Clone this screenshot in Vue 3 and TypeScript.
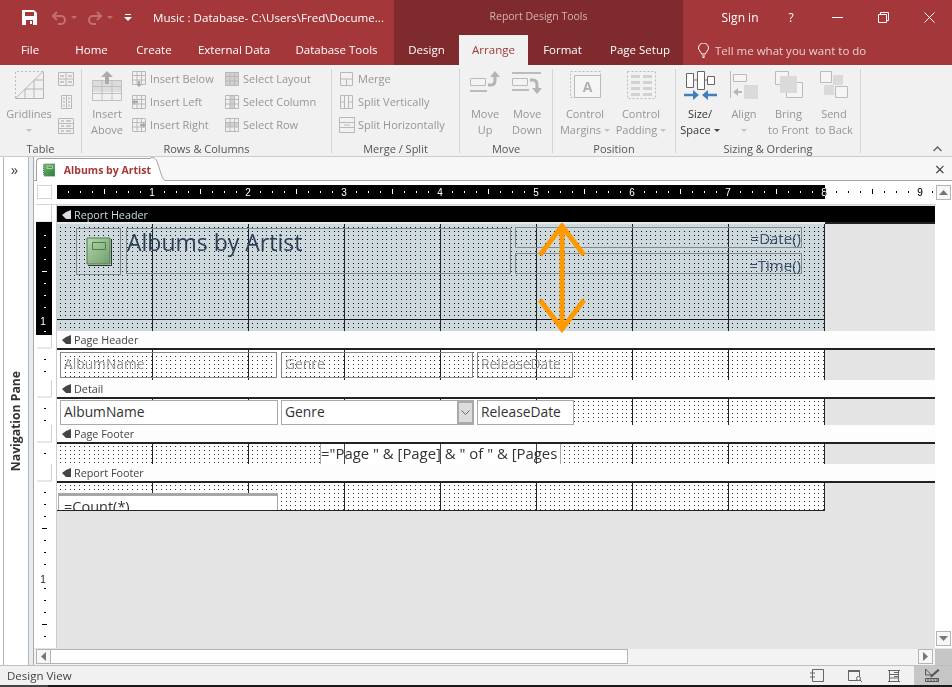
<script setup lang="ts">
type Tab = { label: string; width: number; active?: boolean }

const mainTabs: Tab[] = [
  { label: 'File', width: 60 },
  { label: 'Home', width: 63 },
  { label: 'Create', width: 62 },
  { label: 'External Data', width: 98 },
  { label: 'Database Tools', width: 107 },
]
const contextTabs: Tab[] = [
  { label: 'Design', width: 65 },
  { label: 'Arrange', width: 69, active: true },
  { label: 'Format', width: 69 },
  { label: 'Page Setup', width: 86 },
]

// ruler ticks every 1/8 inch = 12px, origin at the left of the paper
const hTicks: number[] = []
for (let n = 1; n <= 73; n++) hTicks.push(n)

const vTicks = [235, 247, 259, 271, 283, 295, 307, 331, 359, 371, 408, 420, 453, 492, 504, 516, 528, 540, 552, 564, 588, 600, 612, 624, 636]
const longTicks = [271, 528, 624]
const whiteTo = 335
const vCells = [[205, 17], [335, 13], [380, 17], [425, 17], [464, 17]]
</script>

<template>
  <div class="app">
    <svg width="0" height="0" class="defs">
      <symbol id="minigrid" viewBox="0 0 14 14">
        <path d="M.5.5h13v13H.5zM.5 4.5h13M.5 9h13M5 .5v13M9.500 .5v13" fill="none" stroke="#b8b8b8" />
      </symbol>
    </svg>

    <div class="titlebar">
      <div class="qat">
        <svg class="save" width="15" height="15" viewBox="0 0 15 15"><path d="M0 0h12l3 3v12H0z" fill="#fff" /><path d="M3 2h9v4H3zM4 10h7v5H4z" fill="#a4373a" /><path d="M8 11h2v3H8z" fill="#fff" /></svg>
        <svg class="undo" width="16" height="14" viewBox="0 0 16 14"><path d="M6 1 2 5l4 4M2 5h8a4 4 0 0 1 0 8H7" fill="none" stroke="#c17173" stroke-width="2" /></svg>
        <span class="mini dim" />
        <svg class="redo" width="16" height="14" viewBox="0 0 16 14"><path d="m10 1 4 4-4 4M14 5H6a4 4 0 0 0 0 8h3" fill="none" stroke="#c17173" stroke-width="2" /></svg>
        <span class="mini dim" />
        <svg class="custom" width="8" height="8" viewBox="0 0 8 8"><path d="M1 0h6v1H1zM0 3h8L4 7z" fill="#fff" /></svg>
        <span class="doc-title">Music : Database- C:\Users\Fred\Docume...</span>
      </div>
      <div class="context-title">Report Design Tools</div>
      <div class="winctl">
        <span class="wbtn signin">Sign in</span>
        <span class="wbtn">?</span>
        <span class="wbtn"><svg width="11" height="11" viewBox="0 0 11 11"><path d="M0 5.500h11" stroke="#fff" /></svg></span>
        <span class="wbtn"><svg width="11" height="11" viewBox="0 0 11 11"><path d="M.5 2.500h8v8h-8zM2.500 2.500v-2h8v8h-2" fill="none" stroke="#fff" /></svg></span>
        <span class="wbtn"><svg width="11" height="11" viewBox="0 0 11 11"><path d="m.5.500 10 10M10.500.5l-10 10" stroke="#fff" /></svg></span>
      </div>
    </div>

    <div class="tabs">
      <span v-for="t in mainTabs" :key="t.label" class="tab" :style="{ width: t.width + 'px' }">{{ t.label }}</span>
      <span class="tab-gap" />
      <div class="context-tabs">
        <span v-for="t in contextTabs" :key="t.label" class="tab" :class="{ active: t.active }" :style="{ width: t.width + 'px' }">{{ t.label }}</span>
      </div>
      <div class="tellme">
        <svg width="11" height="15" viewBox="0 0 11 15"><path d="M3.500 11C3 8.500.5 7.500.5 5a5 5 0 0 1 10 0c0 2.500-2.500 3.500-3 6zM4 13h3M4.500 14.500h2" fill="none" stroke="#fff" /></svg>
        <span>Tell me what you want to do</span>
      </div>
    </div>

    <div class="ribbon">
      <!-- Table -->
      <div class="group g-table">
        <div class="gbody">
          <div class="big w52">
            <div class="bigicon">
              <svg width="29" height="28" viewBox="0 0 29 28"><path d="M.5 27V.5H28" fill="none" stroke="#bbb" stroke-dasharray="2 2" /><path d="M28 .5.5 27.500H28.500V.5M10 18v9M19 9v18M10 18h18M19 9h9" fill="none" stroke="#b5b5b5" /></svg>
            </div>
            <span>Gridlines</span>
            <i class="caret" />
          </div>
          <div class="stack">
            <svg width="16" height="14" viewBox="0 0 16 14"><path d="M.5.5h15v13H.5zM.5 7h15M8 .5v13" fill="none" stroke="#b8b8b8" /><path d="M2 3h4v2H2zM10 3h4v2h-4zM10 9h4v2h-4zM2 9h4v2H2z" fill="#c8c8c8" /></svg>
            <svg width="11" height="14" viewBox="0 0 11 14"><path d="M.5.5h10v13H.5zM5.500 .5v13" fill="none" stroke="#b8b8b8" /><path d="M2 2.500h2v2H2zM7 2.500h2v2H7zM2 6h2v2H2zM7 6h2v2H7zM2 9.500h2v2H2zM7 9.500h2v2H7z" fill="#c8c8c8" /></svg>
            <svg width="16" height="16" viewBox="0 0 16 16"><path d="M.5.500h15v15H.5zM.5 5.500h15M.5 10.500h15" fill="none" stroke="#b8b8b8" /><path d="M3 2h3v2H3zM8 2h5v2H8zM3 7h3v2H3zM8 7h5v2H8zM3 12h3v2H3zM8 12h5v2H8z" fill="#c8c8c8" /></svg>
          </div>
        </div>
        <div class="glabel">Table</div>
      </div>

      <!-- Rows & Columns -->
      <div class="group g-rows">
        <div class="gbody">
          <div class="big w44">
            <div class="bigicon">
              <svg width="30" height="30" viewBox="0 0 30 30"><path d="M.5 9h29v12H.5z" fill="#dcdcdc" /><path d="M.5 9.500h29v20H.5zM.5 15.500h29M.5 22.500h29M10 9.500v20M20 9.500v20" fill="none" stroke="#c0c0c0" /><path d="M15 0l6 6h-4v7h-4V6H9z" fill="#ababab" /></svg>
            </div>
            <span>Insert</span>
            <span>Above</span>
          </div>
          <div class="rows r93">
            <div class="small"><svg width="14" height="16" viewBox="0 0 14 16"><use href="#minigrid" width="14" height="14" /><path d="m7 16-3-3h2v-3h2v3h2z" fill="#a8a8a8" /></svg><span>Insert Below</span></div>
            <div class="small"><svg width="14" height="14" viewBox="0 0 14 14"><use href="#minigrid" width="14" height="14" /><path d="M0 7l3-3v2h3v2H3v2z" fill="#a8a8a8" /></svg><span>Insert Left</span></div>
            <div class="small"><svg width="14" height="14" viewBox="0 0 14 14"><use href="#minigrid" width="14" height="14" /><path d="M14 7l-3-3v2H8v2h3v2z" fill="#a8a8a8" /></svg><span>Insert Right</span></div>
          </div>
          <div class="rows">
            <div class="small"><svg width="14" height="14" viewBox="0 0 14 14"><path d="M0 0h14v14H0z" fill="#d0d0d0" /><use href="#minigrid" width="14" height="14" /></svg><span>Select Layout</span></div>
            <div class="small"><svg width="14" height="14" viewBox="0 0 14 14"><path d="M5 0h5v14H5z" fill="#d0d0d0" /><use href="#minigrid" width="14" height="14" /></svg><span>Select Column</span></div>
            <div class="small"><svg width="14" height="14" viewBox="0 0 14 14"><path d="M0 4h14v5H0z" fill="#d0d0d0" /><use href="#minigrid" width="14" height="14" /></svg><span>Select Row</span></div>
          </div>
        </div>
        <div class="glabel">Rows &amp; Columns</div>
      </div>

      <!-- Merge / Split -->
      <div class="group g-merge">
        <div class="gbody">
          <div class="rows">
            <div class="small"><svg width="14" height="14" viewBox="0 0 14 14"><path d="M.5.500h12v13H.5zM.5 7h12M6.500 7v6.500" fill="none" stroke="#b8b8b8" /></svg><span>Merge</span></div>
            <div class="small"><svg width="14" height="14" viewBox="0 0 14 14"><path d="M.5.500h12v13H.5zM4.500.5v13M8.500 .5v13M.5 7h4M8.500 7h4" fill="none" stroke="#b8b8b8" /></svg><span>Split Vertically</span></div>
            <div class="small"><svg width="16" height="16" viewBox="0 0 16 16" class="wide"><path d="M.5.500h15v15H.5zM.5 5.500h15M.5 10.500h15M5 8h6" fill="none" stroke="#b8b8b8" /></svg><span>Split Horizontally</span></div>
          </div>
        </div>
        <div class="glabel">Merge / Split</div>
      </div>

      <!-- Move -->
      <div class="group g-move">
        <div class="gbody">
          <div class="big w42">
            <div class="bigicon">
              <svg width="30" height="23" viewBox="0 0 30 23"><path d="M0 20h17" stroke="#bbb" stroke-width="2" /><path d="M.5 7.500h15v7H.5z" fill="#f4f2f4" stroke="#bbb" /><path d="M18 14h3c3 0 4-2 4-5V6" fill="none" stroke="#b4b4b4" stroke-width="3" /><path d="m25 0 5 6h-10z" fill="#b4b4b4" /></svg>
            </div>
            <span>Move</span>
            <span>Up</span>
          </div>
          <div class="big w42">
            <div class="bigicon">
              <svg width="30" height="23" viewBox="0 0 30 23"><path d="M0 2h29" stroke="#bbb" stroke-width="2" /><path d="M.5 7.500h15v7H.5z" fill="#f4f2f4" stroke="#bbb" /><path d="M0 19h17" stroke="#bbb" stroke-width="2" /><path d="M18 9h3c3 0 4 2 4 5v3" fill="none" stroke="#b4b4b4" stroke-width="3" /><path d="m25 23 5-6h-10z" fill="#b4b4b4" /></svg>
            </div>
            <span>Move</span>
            <span>Down</span>
          </div>
        </div>
        <div class="glabel">Move</div>
      </div>

      <!-- Position -->
      <div class="group g-pos">
        <div class="gbody">
          <div class="big w56">
            <div class="bigicon">
              <svg width="31" height="27" viewBox="0 0 31 27"><path d="M.5.500h30v26H.5z" fill="none" stroke="#bbb" stroke-dasharray="2 2" /><path d="M4.500 4.500h26v22h-26z" fill="#f6f5f6" stroke="#bbb" /><text x="17.500" y="21" class="a-glyph">A</text></svg>
            </div>
            <span>Control</span>
            <span class="with-caret">Margins<i class="caret inline" /></span>
          </div>
          <div class="big w56">
            <div class="bigicon">
              <svg width="29" height="28" viewBox="0 0 29 28"><path d="M.5.500h28v27H.5z" fill="none" stroke="#bbb" stroke-dasharray="2 2" /><path d="M4 4h9v3H4zM16 4h9v3h-9zM4 10h9v3H4zM16 10h9v3h-9zM4 16h9v3H4zM16 16h9v3h-9zM4 22h9v3H4zM16 22h9v3h-9z" fill="#d2d2d2" /></svg>
            </div>
            <span>Control</span>
            <span class="with-caret">Padding<i class="caret inline" /></span>
          </div>
        </div>
        <div class="glabel">Position</div>
      </div>

      <!-- Sizing & Ordering -->
      <div class="group g-size">
        <div class="gbody">
          <div class="big w44 on">
            <div class="bigicon">
              <svg width="33" height="30" viewBox="0 0 33 30"><path d="M3 9h28" stroke="#777" /><path d="M2.500 2.500h7v14h-7zM13.500 .5h7v18h-7zM23.500 5.500h7v8h-7z" fill="#fff" stroke="#666" /><path d="M0 24h12M21 24h12" stroke="#3f7fbd" stroke-width="2.500" /><path d="M9 19l6 5-6 5zM24 19l-6 5 6 5z" fill="#3f7fbd" /></svg>
            </div>
            <span>Size/</span>
            <span class="with-caret">Space<i class="caret inline dark" /></span>
          </div>
          <div class="big w44">
            <div class="bigicon">
              <svg width="28" height="28" viewBox="0 0 28 28"><path d="M.5 0v27" stroke="#bbb" /><path d="M3.500 3.500h13v7h-13z" fill="#f6f5f6" stroke="#bbb" /><path d="M14 14h14v14H14z" fill="#dcd9dc" /><path d="M3 21l5-4v3h4v2H8v3z" fill="#b8b8b8" /></svg>
            </div>
            <span>Align</span>
            <i class="caret" />
          </div>
          <div class="big w45">
            <div class="bigicon">
              <svg width="28" height="27" viewBox="0 0 28 27"><path d="M.5.500h13v13H.5z" fill="#f6f5f6" stroke="#bbb" /><path d="M11.500 11.500h16v15h-16z" fill="#f6f5f6" stroke="#bbb" /><path d="M5 5h17v17H5z" fill="#dcd9dc" /></svg>
            </div>
            <span>Bring</span>
            <span>to Front</span>
          </div>
          <div class="big w46">
            <div class="bigicon">
              <svg width="28" height="27" viewBox="0 0 28 27"><path d="M13 4h10v10H13zM4 14h10v10H4z" fill="#dcd9dc" /><path d="M.5.500h11v11H.5z" fill="#f6f5f6" stroke="#bbb" /><path d="M15.500 15.500h12v11h-12z" fill="#f6f5f6" stroke="#bbb" /></svg>
            </div>
            <span>Send</span>
            <span>to Back</span>
          </div>
        </div>
        <div class="glabel">Sizing &amp; Ordering</div>
      </div>

      <svg class="collapse" width="9" height="6" viewBox="0 0 9 6"><path d="m.5 5 4-4 4 4" fill="none" stroke="#666" stroke-width="1.500" /></svg>
    </div>

    <div class="main">
      <div class="nav">
        <span class="nav-open">»</span>
        <span class="nav-label">Navigation Pane</span>
      </div>
      <div class="splitter" />

      <div class="doc">
        <div class="strip">
          <div class="doc-tab">
            <svg width="13" height="14" viewBox="0 0 13 14">
              <defs>
                <linearGradient id="tabfill" x1="0" y1="0" x2="1" y2="1">
                  <stop offset="0" stop-color="#6db56f" />
                  <stop offset="1" stop-color="#2f7a3a" />
                </linearGradient>
              </defs>
              <path d="M1 0h12v14H1z" fill="url(#tabfill)" />
              <path d="M.5 1v12" stroke="#333" stroke-dasharray="1 1" />
              <path d="M4.500 2.500h6v3h-6z" fill="none" stroke="#b7dcb7" />
            </svg>
            <span>Albums by Artist</span>
          </div>
          <svg class="tab-ear" width="14" height="24" viewBox="0 0 14 24"><path d="M0 0h1c3 0 4 2 5 4l5 15c1 2 2 4 3 4v1H0z" fill="#fff" /><path d="M0 .5h1c3 0 4 2 5 4l5 15c1 2 2 4 3 4" fill="none" stroke="#a9a298" /></svg>
          <span class="doc-close">×</span>
        </div>

        <div class="work">
          <div class="pane">
            <div class="ruler-row">
              <span class="corner" />
              <svg class="hruler" width="878" height="14" viewBox="0 0 878 14">
                <rect width="768" height="14" fill="#000" />
                <g class="rt">
                  <template v-for="n in hTicks" :key="n">
                    <text v-if="n % 8 === 0" :x="n * 12 - 1" y="11" class="rnum">{{ n / 8 }}</text>
                    <rect v-else-if="n % 4 === 0" :x="n * 12 - 1" y="4" width="1" height="5" fill="#fff" />
                    <rect v-else :x="n * 12 - 1" y="6" width="1" height="2" fill="#fff" />
                  </template>
                </g>
              </svg>
            </div>

            <div class="canvas">
              <svg class="vruler" width="16" height="443" viewBox="0 0 16 443">
                <path v-for="c in vCells" :key="c[0]" :d="`M15.500 ${c[0] - 205}v${c[1]}H1`" fill="none" stroke="#d0d0d0" />
                <rect y="17" width="16" height="113" fill="#000" />
                <rect v-for="y in vTicks" :key="y" :x="longTicks.includes(y) ? 6 : 8" :y="y - 205" :width="longTicks.includes(y) ? 5 : 2" height="1" :fill="y < whiteTo ? '#fff' : '#000'" />
                <text x="7" y="120" class="rnum white">1</text>
                <text x="7" y="378" class="rnum">1</text>
              </svg>
              <div class="gutter" />

              <div class="report">
                <div class="band black"><svg class="pin" width="9" height="9" viewBox="0 0 9 9"><path d="M9 0v9H4L0 5l4-3z" fill="currentColor" /></svg>Report Header</div>
                <div class="sect head">
                  <div class="paper">
                    <div class="frame img-frame">
                      <svg width="27" height="29" viewBox="0 0 27 29">
                        <defs>
                          <linearGradient id="bookfill" x1="0" y1="0" x2="1" y2="1">
                            <stop offset="0" stop-color="#b5d6ab" />
                            <stop offset="1" stop-color="#6f9f6c" />
                          </linearGradient>
                        </defs>
                        <path d="M2 1h23v26H2z" fill="url(#bookfill)" stroke="#4e7a50" />
                        <path d="M26 2h1v27H3v-1h23z" fill="#2d3b2d" />
                        <path d="M0 3v23" stroke="#dfe6df" stroke-width="2" stroke-dasharray="1 2" />
                        <path d="M7.500 5.500h13v7h-13z" fill="none" stroke="#4e7a50" />
                      </svg>
                    </div>
                    <div class="frame title-frame">Albums by Artist</div>
                    <div class="frame date-frame">=Date()</div>
                    <div class="frame time-frame">=Time()</div>
                  </div>
                  <div class="rest" />
                </div>

                <div class="band"><svg class="pin" width="9" height="9" viewBox="0 0 9 9"><path d="M9 0v9H4L0 5l4-3z" fill="currentColor" /></svg>Page Header</div>
                <div class="sect ph">
                  <div class="paper">
                    <div class="frame lbl lbl-album">AlbumName</div>
                    <div class="frame lbl lbl-genre">Genre</div>
                    <div class="frame lbl lbl-date">ReleaseDate</div>
                  </div>
                  <div class="rest" />
                </div>

                <div class="band"><svg class="pin" width="9" height="9" viewBox="0 0 9 9"><path d="M9 0v9H4L0 5l4-3z" fill="currentColor" /></svg>Detail</div>
                <div class="sect det">
                  <div class="paper">
                    <div class="field f-album">AlbumName</div>
                    <div class="field f-genre">
                      <span>Genre</span>
                      <span class="combo-btn"><svg width="9" height="6" viewBox="0 0 9 6"><path d="m.5.500 4 4 4-4" fill="none" stroke="#666" /></svg></span>
                    </div>
                    <div class="field f-date">ReleaseDate</div>
                  </div>
                  <div class="rest" />
                </div>

                <div class="band"><svg class="pin" width="9" height="9" viewBox="0 0 9 9"><path d="M9 0v9H4L0 5l4-3z" fill="currentColor" /></svg>Page Footer</div>
                <div class="sect pf">
                  <div class="paper">
                    <div class="page-expr">="Page " &amp; [Page] &amp; " of " &amp; [Pages</div>
                  </div>
                  <div class="rest" />
                </div>

                <div class="band"><svg class="pin" width="9" height="9" viewBox="0 0 9 9"><path d="M9 0v9H4L0 5l4-3z" fill="currentColor" /></svg>Report Footer</div>
                <div class="sect rf">
                  <div class="paper">
                    <div class="count-box">=Count(*)</div>
                  </div>
                  <div class="rest" />
                </div>
              </div>

              <svg class="resize-arrow" width="50" height="110" viewBox="0 0 50 110">
                <path d="M25 4v102M3 32 25 3l22 29M3 77l22 29 22-29" fill="none" stroke="#ff9900" stroke-width="5" />
              </svg>
            </div>
          </div>

          <div class="vscroll">
            <span class="sbtn"><svg width="9" height="5" viewBox="0 0 9 5"><path d="M4.500 0 9 5H0z" fill="#777" /></svg></span>
            <span class="sbtn"><svg width="9" height="5" viewBox="0 0 9 5"><path d="M4.500 5 9 0H0z" fill="#777" /></svg></span>
          </div>
        </div>

        <div class="hbar">
          <span class="hbtn"><svg width="5" height="9" viewBox="0 0 5 9"><path d="M0 4.500 5 0v9z" fill="#777" /></svg></span>
          <span class="hthumb" />
          <span class="htrack" />
          <span class="hbtn"><svg width="5" height="9" viewBox="0 0 5 9"><path d="M5 4.500 0 0v9z" fill="#777" /></svg></span>
          <span class="hcorner" />
        </div>
      </div>
    </div>

    <div class="status">
      <span>Design View</span>
      <div class="views">
        <span class="view"><svg width="14" height="13" viewBox="0 0 14 13"><path d="M2.500.5h11v12h-11zM0 4h5M0 8h5" fill="none" stroke="#666" /></svg></span>
        <span class="view"><svg width="15" height="13" viewBox="0 0 15 13"><path d="M.5 1.500h11v10H.5z" fill="none" stroke="#666" /><path d="M0 1h12v2H0z" fill="#666" /><circle cx="10.500" cy="9.500" r="2" fill="#f1f1f1" stroke="#666" /><path d="m12 11 2 2" stroke="#666" /></svg></span>
        <span class="view"><svg width="12" height="12" viewBox="0 0 12 12"><path d="M1.500.5h9v11h-9zM0 .5h12M0 11.500h12M1.500 4.500h9M1.500 8h9" fill="none" stroke="#666" /><path d="M6 2h4v1H6zM6 6h4v1H6z" fill="#666" /></svg></span>
        <span class="view on"><svg width="15" height="13" viewBox="0 0 15 13"><path d="M.5 0v6l6 0zM.5 9.500h13v3H.5zM3 10v2M6 10v2M9 10v2M12 10v2" fill="none" stroke="#555" /><path d="m5 7 8-7 1.500 1.500-8 7z" fill="#555" /></svg></span>
      </div>
    </div>
    <div class="floor"><span /></div>
  </div>
</template>

<style scoped>
.app {
  width: 952px;
  height: 687px;
  overflow: hidden;
  display: flex;
  flex-direction: column;
  font-family: "Open Sans", "Noto Sans", sans-serif;
  font-size: 11px;
  background: #f1f1f1;
  color: #969696;
}
.defs {
  position: absolute;
}

/* title bar */
.titlebar {
  height: 35px;
  display: flex;
  background: #a4373a;
  color: #fff;
}
.qat {
  width: 394px;
  display: flex;
  align-items: center;
  padding-left: 22px;
  box-sizing: border-box;
}
.undo {
  margin-left: 14px;
}
.mini {
  width: 0;
  height: 0;
  margin-left: 4px;
  border: 3px solid transparent;
  border-top: 3px solid #fff;
  border-bottom: 0;
}
.mini.dim {
  border-top-color: #c17173;
}
.redo {
  margin-left: 10px;
}
.custom {
  margin-left: 11px;
}
.doc-title {
  margin-left: 21px;
  font-size: 11.600px;
  white-space: nowrap;
}
.context-title {
  width: 289px;
  background: #7f2a2c;
  color: #d5b4b5;
  text-align: center;
  line-height: 33px;
  font-size: 10.500px;
}
.winctl {
  flex: 1;
  display: flex;
  justify-content: flex-end;
  align-items: center;
}
.wbtn {
  width: 46px;
  text-align: center;
  font-size: 12px;
  white-space: nowrap;
  display: flex;
  justify-content: center;
}
.signin {
  margin-right: 5px;
}

/* ribbon tabs */
.tabs {
  height: 30px;
  display: flex;
  background: #a4373a;
  color: #fff;
  font-size: 11.500px;
}
.tab {
  line-height: 30px;
  text-align: center;
  white-space: nowrap;
}
.tab-gap {
  width: 4px;
}
.context-tabs {
  display: flex;
  background: #7f2a2c;
}
.tab.active {
  background: #f1f1f1;
  color: #a4373a;
}
.tellme {
  display: flex;
  align-items: center;
  gap: 6px;
  padding-left: 15px;
  color: #e8cfcf;
}

/* ribbon */
.ribbon {
  height: 92px;
  box-sizing: border-box;
  padding: 4px 0 0;
  display: flex;
  position: relative;
  border-bottom: 1px solid #cbcbcb;
}
.group {
  height: 84px;
  border-right: 1px solid #d4d4d4;
  box-sizing: border-box;
  display: flex;
  flex-direction: column;
  flex: none;
}
.g-table { width: 82px; }
.g-rows { width: 250px; }
.g-merge { width: 128px; }
.g-move { width: 93px; }
.g-pos { width: 123px; }
.g-size { width: 185px; }
.g-table .gbody, .g-rows .gbody { padding-left: 3px; }
.g-merge .gbody { padding-left: 8px; }
.g-move .gbody, .g-pos .gbody { padding-left: 4px; }
.g-size .gbody { padding-left: 2px; }
.gbody {
  height: 72px;
  flex: none;
  display: flex;
}
.glabel {
  height: 16px;
  flex: none;
  line-height: 16px;
  text-align: center;
  color: #555;
  white-space: nowrap;
}
.big {
  display: flex;
  flex-direction: column;
  align-items: center;
  line-height: 16px;
  white-space: nowrap;
  flex: none;
}
.big.on {
  color: #333;
}
.w42 { width: 42px; }
.w44 { width: 44px; }
.w45 { width: 45px; }
.w46 { width: 46px; }
.w52 { width: 52px; }
.w56 { width: 56px; }
.bigicon {
  height: 37px;
  display: flex;
  align-items: flex-start;
  padding-top: 2px;
  box-sizing: border-box;
}
.caret {
  display: block;
  width: 0;
  height: 0;
  margin-top: 7px;
  border: 3px solid transparent;
  border-top: 3px solid #c2c2c2;
  border-bottom: 0;
}
.caret.inline {
  display: inline-block;
  margin: 0 0 2px 3px;
}
.caret.dark {
  border-top-color: #444;
}
.stack {
  display: flex;
  flex-direction: column;
  align-items: center;
  width: 16px;
  gap: 9px;
  margin: 3px 0 0 3px;
}
.rows {
  display: flex;
  flex-direction: column;
  margin-top: -2px;
  margin-left: 3px;
}
.rows + .rows {
  margin-left: 0;
}
.g-merge .rows {
  margin-left: 0;
}
.r93 {
  width: 93px;
}
.small {
  height: 23px;
  display: flex;
  align-items: center;
  gap: 4px;
  white-space: nowrap;
}
.wide {
  margin: 0 -1px;
}
.a-glyph {
  font-size: 14px;
  font-weight: 700;
  fill: #b0b0b0;
  text-anchor: middle;
}
.collapse {
  position: absolute;
  left: 933px;
  top: 81px;
}

/* main area */
.main {
  height: 508px;
  display: flex;
  background: #fff;
}
.nav {
  width: 26px;
  flex: none;
  margin-left: 3px;
  box-sizing: border-box;
  border-left: 1px solid #b4b4b4;
  border-right: 1px solid #b4b4b4;
  display: flex;
  flex-direction: column;
  align-items: center;
  color: #444;
}
.nav-open {
  font-size: 15px;
  line-height: 24px;
  margin-right: 3px;
}
.nav-label {
  writing-mode: vertical-rl;
  transform: rotate(180deg);
  font-weight: 700;
  font-size: 12.200px;
  color: #333;
  margin-top: 190px;
  margin-right: 1px;
  white-space: nowrap;
}
.splitter {
  width: 5px;
  flex: none;
  box-sizing: border-box;
  background: #e6ebf1;
  border-right: 1px solid #aaa;
}
.doc {
  flex: 1;
  display: flex;
  flex-direction: column;
  min-width: 0;
}
.strip {
  height: 24px;
  flex: none;
  display: flex;
  background: #f7f7f7;
  border-bottom: 1px solid #a6a6a6;
  box-sizing: border-box;
  padding-left: 2px;
  padding-top: 1px;
  position: relative;
}
.doc-tab {
  width: 115px;
  display: flex;
  align-items: center;
  gap: 9px;
  padding-left: 6px;
  box-sizing: border-box;
  background: #fff;
  border: 1px solid #a9a298;
  border-width: 1px 0 0 1px;
  border-top-left-radius: 4px;
  height: 23px;
  color: #a4373a;
  font-weight: 700;
  font-size: 10.500px;
  white-space: nowrap;
}
.tab-ear {
  margin-top: -1px;
  position: relative;
  z-index: 1;
}
.doc-close {
  margin-left: auto;
  margin-right: 7px;
  font-size: 18px;
  line-height: 22px;
  color: #444;
}
.work {
  flex: 1;
  display: flex;
  min-height: 0;
}
.pane {
  flex: 1;
  padding-left: 2px;
  min-width: 0;
  display: flex;
  flex-direction: column;
}
.ruler-row {
  display: flex;
  margin-top: 4px;
  height: 14px;
  margin-bottom: 5px;
  flex: none;
}
.corner {
  width: 15px;
  margin-left: 1px;
  box-sizing: border-box;
  border: 1px solid #d5d5d5;
  margin-right: 5px;
  flex: none;
}
.hruler {
  flex: none;
}
.rt {
  mix-blend-mode: difference;
}
.rnum {
  font-family: "Liberation Sans", sans-serif;
  font-size: 10px;
  fill: #fff;
  text-anchor: middle;
}
.vruler .rnum {
  fill: #222;
}
.vruler .rnum.white {
  fill: #fff;
}
.canvas {
  flex: 1;
  display: flex;
  border-top: 1px solid #d5d5d5;
  position: relative;
  min-height: 0;
}
.vruler {
  flex: none;
}
.gutter {
  width: 5px;
  flex: none;
  box-sizing: border-box;
  border-right: 1px solid #ccc;
}
.report {
  width: 878px;
  flex: none;
  padding-top: 1px;
  background: #e4e4e4;
}
.band {
  height: 17px;
  display: flex;
  align-items: center;
  padding-left: 5px;
  gap: 3px;
  background: #fdfdfd;
  color: #444;
  font-size: 10.800px;
  white-space: nowrap;
  box-sizing: border-box;
}
.band.black {
  height: 16px;
  background: #000;
  color: #c6dadd;
  padding-top: 1px;
}
.pin {
  color: #444;
}
.black .pin {
  color: #ddd;
}
.sect {
  display: flex;
}
.sect.head { height: 109px; }
.sect.ph { height: 32px; }
.sect.det { height: 28px; }
.sect.pf { height: 22px; }
.sect.rf { height: 30px; }
/* design grid: lines every inch, dots 20 per inch across (rounded to whole px) and 24 per inch down */
.paper {
  --dot-color: #333;
  --dy: 2px;
  --dot: radial-gradient(circle at .5px .5px, var(--dot-color) .6px, transparent .6px);
  width: 768px;
  flex: none;
  box-sizing: border-box;
  position: relative;
  overflow: hidden;
  border-top: 2px solid #222;
  background-color: #fff;
  background-image:
    linear-gradient(#111, #111),
    linear-gradient(90deg, #222 1px, transparent 1px),
    var(--dot), var(--dot), var(--dot), var(--dot), var(--dot);
  background-size: 0 0, 96px 100%, 24px 4px, 24px 4px, 24px 4px, 24px 4px, 24px 4px;
  background-position:
    0 95px, 95px 0,
    3px var(--dy), 8px var(--dy), 13px var(--dy), 17px var(--dy), 22px var(--dy);
  background-repeat: no-repeat, repeat, repeat, repeat, repeat, repeat, repeat;
}
.head .paper {
  --dot-color: #111;
  --dy: 3px;
  border-top-color: #e3e9ec;
  background-color: #ced9de;
  background-size: 100% 1px, 96px 100%, 24px 4px, 24px 4px, 24px 4px, 24px 4px, 24px 4px;
}
.rf .paper {
  border-bottom: 1px solid #222;
  border-right: 1px solid #222;
}
.rest {
  flex: 1;
  border-top: 2px solid #222;
  background: #e4e4e4;
}
.frame {
  position: absolute;
  box-sizing: border-box;
  border: 1px solid #7f8a8f;
  white-space: nowrap;
}
.img-frame {
  left: 19px;
  top: 4px;
  width: 45px;
  height: 47px;
  padding: 8px 0 0 8px;
}
.title-frame {
  left: 69px;
  top: 4px;
  width: 385px;
  height: 46px;
  font-size: 23px;
  line-height: 27px;
  color: #2b3f55;
}
.date-frame, .time-frame {
  left: 458px;
  width: 287px;
  height: 21px;
  text-align: right;
  font-size: 15px;
  line-height: 20px;
  color: #3a4f68;
}
.date-frame { top: 3px; }
.time-frame { top: 29px; line-height: 22px; }
.lbl {
  top: 2px;
  height: 26px;
  border-color: #858585;
  font-size: 13.800px;
  line-height: 22px;
  padding-left: 3px;
  color: #929292;
}
.lbl-album { left: 3px; width: 217px; }
.lbl-genre { left: 224px; width: 192px; }
.lbl-date { left: 420px; width: 96px; }
.field {
  position: absolute;
  top: 1px;
  height: 25px;
  box-sizing: border-box;
  border: 1px solid #aaa;
  background: #fff;
  color: #333;
  font-size: 13.800px;
  line-height: 21px;
  padding-left: 3px;
  white-space: nowrap;
}
.f-album { left: 3px; width: 218px; }
.f-genre {
  left: 224px;
  width: 193px;
  display: flex;
  justify-content: space-between;
}
.f-date { left: 420px; width: 97px; }
.combo-btn {
  width: 17px;
  margin-right: -1px;
  box-sizing: border-box;
  border: 2px solid #aaa;
  background: #dcdcdc;
  display: flex;
  align-items: center;
  justify-content: center;
}
.page-expr {
  position: absolute;
  left: 263px;
  top: 0;
  width: 241px;
  height: 20px;
  box-sizing: border-box;
  border-left: 1px solid #aaa;
  border-right: 1px solid #aaa;
  background: linear-gradient(90deg, #444 1px, transparent 1px) 23px 0 / 96px 100% #fff;
  color: #333;
  font-size: 14.900px;
  line-height: 19px;
  white-space: nowrap;
  overflow: hidden;
}
.count-box {
  position: absolute;
  left: 1px;
  top: 10px;
  width: 220px;
  height: 20px;
  box-sizing: border-box;
  border-top: 3px solid #a6a6a6;
  border-right: 1px solid #aaa;
  border-left: 1px solid #aaa;
  padding-left: 5px;
  background: #fff;
  color: #333;
  font-size: 14.500px;
  line-height: 22px;
  overflow: hidden;
  white-space: nowrap;
}
.resize-arrow {
  position: absolute;
  left: 501px;
  top: 18px;
}
.vscroll {
  width: 16px;
  flex: none;
  display: flex;
  flex-direction: column;
  justify-content: space-between;
  padding: 4px 0 2px;
  box-sizing: border-box;
  background: #fff;
}
.sbtn {
  width: 15px;
  height: 15px;
  box-sizing: border-box;
  border: 1px solid #b4b4b4;
  background: #f7f7f7;
  display: flex;
  align-items: center;
  justify-content: center;
}
.hbar {
  height: 17px;
  flex: none;
  display: flex;
  padding-left: 2px;
  background: #f3f3f3;
  border-top: 1px solid #e4e4e4;
  box-sizing: border-box;
}
.hbtn {
  width: 15px;
  height: 15px;
  flex: none;
  box-sizing: border-box;
  border: 1px solid #b4b4b4;
  background: #f7f7f7;
  display: flex;
  align-items: center;
  justify-content: center;
}
.hthumb {
  width: 577px;
  height: 15px;
  box-sizing: border-box;
  background: #fff;
  border: 1px solid #b4b4b4;
  border-left: 0;
}
.htrack {
  flex: 1;
}
.hcorner {
  width: 17px;
  background: #c6c6c9;
  margin-left: 2px;
}

/* status bar */
.status {
  height: 20px;
  flex: none;
  box-sizing: border-box;
  border-top: 1px solid #c0c0c0;
  display: flex;
  justify-content: space-between;
  align-items: center;
  padding-left: 7px;
  color: #444;
  font-size: 11.500px;
}
.views {
  display: flex;
  align-self: stretch;
}
.view {
  width: 38.500px;
  display: flex;
  align-items: center;
  justify-content: center;
}
.view.on {
  background: #c6c6c6;
}
.floor {
  height: 2px;
  flex: none;
  background: #1a1a1a;
}
.floor span {
  display: block;
  width: 48px;
  height: 2px;
  background: #444;
}
</style>
